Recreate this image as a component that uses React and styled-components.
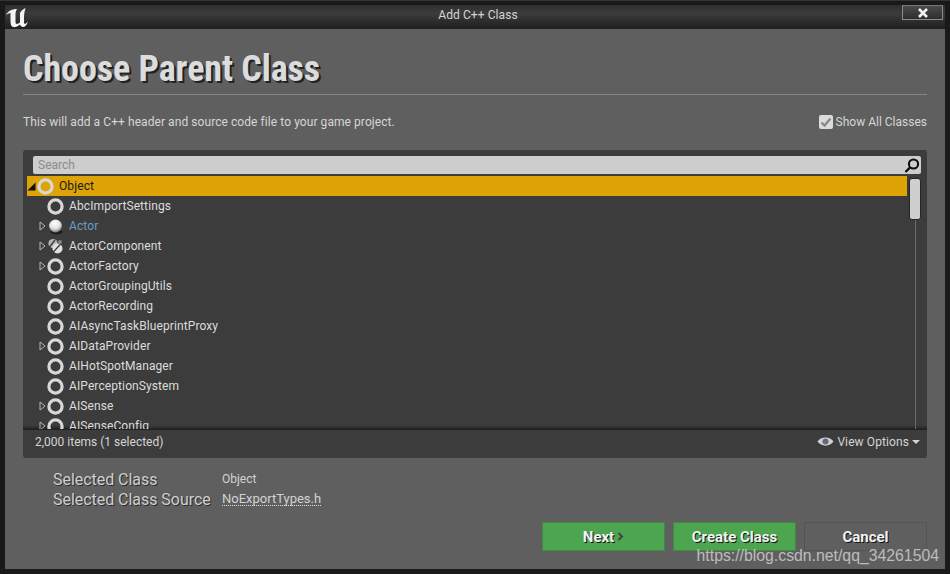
import React from "react";
import styled, { createGlobalStyle } from "styled-components";

const Global = createGlobalStyle`
  html, body { margin: 0; padding: 0; background: #1c1c1c; }
  #root { width: 950px; height: 574px; overflow: hidden; }
  * { box-sizing: border-box; }
`;

const Window = styled.div`
  position: relative;
  width: 950px;
  height: 574px;
  padding: 4px 5px 5px 5px;
  background: #191919;
  border-top: 1px solid #333;
  font-family: Roboto, "Liberation Sans", sans-serif;
  display: flex;
  flex-direction: column;
  overflow: hidden;
`;

const TitleBar = styled.div`
  height: 24px;
  flex: none;
  padding: 0 0 5px 6px;
  background: linear-gradient(#2e2e2e, #3c3c3c 35%, #1e1e1e);
  display: flex;
  align-items: center;
  justify-content: center;
  position: relative;
  color: #d4d4d4;
  font-size: 12px;
  letter-spacing: 0.08px;
`;

const Logo = styled.svg`
  position: absolute;
  left: 1px;
  top: 2px;
`;

const CloseBtn = styled.div`
  position: absolute;
  right: 2px;
  top: 0;
  width: 41px;
  height: 15px;
  border: 1px solid #8c8c8c;
  border-top-color: #777;
  background: linear-gradient(#4b4b4b, #2e2e2e);
  display: flex;
  align-items: center;
  justify-content: center;
`;

const Body = styled.div`
  flex: 1;
  background: #5f5f5f;
  display: flex;
  flex-direction: column;
  padding: 0 18px;
  min-height: 0;
`;

const Heading = styled.h1`
  margin: 22px 0 0;
  height: 36px;
  line-height: 36px;
  font-size: 36px;
  font-weight: 700;
  color: #dcdcdc;
  text-shadow: 2px 2px 0 #222;
  font-family: Roboto, sans-serif;
  font-stretch: condensed;
  letter-spacing: -0.06px;
`;

const Rule = styled.div`
  height: 1px;
  background: #858585;
  margin-top: 7px;
`;

const InfoRow = styled.div`
  display: flex;
  justify-content: space-between;
  align-items: center;
  margin-top: 18px;
  height: 18px;
  color: #d6d6d6;
  font-size: 12px;
`;

const InfoText = styled.span`
  letter-spacing: 0.07px;
`;

const CheckLabel = styled.div`
  display: flex;
  align-items: center;
  gap: 3px;
`;

const CheckBox = styled.div`
  width: 14px;
  height: 14px;
  border-radius: 2px;
  background: #dcdcdc;
  display: flex;
  align-items: center;
  justify-content: center;
`;

const Panel = styled.div`
  margin-top: 19px;
  height: 308px;
  background: #3c3c3c;
  border-radius: 3px;
  display: flex;
  flex-direction: column;
  padding: 6px 6px 0 4px;
  overflow: hidden;
`;

const SearchBar = styled.div`
  flex: none;
  height: 18px;
  margin-left: 6px;
  background: #cdcdcd;
  border-radius: 2px;
  display: flex;
  align-items: center;
  justify-content: space-between;
  padding: 0 0 0 5px;
  color: #8b8b8b;
  font-size: 12px;
`;

const ListArea = styled.div`
  flex: 1;
  min-height: 0;
  margin-top: 2px;
  display: flex;
  overflow: hidden;
  margin-right: -6px;
  margin-left: -4px;
  padding: 0 6px 0 4px;
  border-bottom: 1px solid #222;
  box-shadow: inset 0 -3px 3px -2px #1a1a1a;
`;

const List = styled.div`
  flex: 1;
  min-width: 0;
  overflow: hidden;
`;

const Row = styled.div`
  height: 20px;
  flex: none;
  display: flex;
  align-items: center;
  padding-left: ${p => (p.$root ? 0 : 11)}px;
  background: ${p => (p.$selected ? "#dea306" : "transparent")};
  color: ${p => (p.$selected ? "#1a1a1a" : p.$link ? "#6d9dc0" : "#dcdcdc")};
  font-size: 12px;
  letter-spacing: 0.1px;
`;

const ArrowSlot = styled.div`
  width: ${p => (p.$root ? 9 : 8)}px;
  height: 10px;
  flex: none;
  display: flex;
  align-items: center;
  justify-content: center;
`;

const IconSlot = styled.div`
  width: 17px;
  height: 17px;
  flex: none;
  margin: 0 5px 0 1px;
`;

const Scroll = styled.div`
  width: 12px;
  flex: none;
  margin-left: 2px;
  padding-top: 2px;
  position: relative;
`;

const ScrollTrack = styled.div`
  position: absolute;
  top: 44px;
  bottom: 0;
  left: 6px;
  width: 1px;
  background: #6a6a6a;
`;

const Thumb = styled.div`
  width: 12px;
  height: 42px;
  background: #cfcfcf;
  border: 1px solid #262626;
  border-radius: 3px;
`;

const StatusBar = styled.div`
  flex: none;
  height: 28px;
  display: flex;
  align-items: center;
  justify-content: space-between;
  padding: 0 1px 5px 8px;
  color: #d4d4d4;
  font-size: 12px;
`;

const ViewOptions = styled.div`
  display: flex;
  align-items: center;
  gap: 3px;
  letter-spacing: 0.1px;
`;

const Details = styled.div`
  margin: 11px 0 0 30px;
  display: grid;
  grid-template-columns: 169px auto;
  grid-auto-rows: 20px;
  align-items: center;
`;

const DetailLabel = styled.div`
  font-size: 16px;
  color: #cfcfcf;
  text-shadow: 1px 1px 0 #2c2c2c;
  letter-spacing: -0.04px;
`;

const DetailValue = styled.div`
  font-size: 12px;
  color: #d2d2d2;
`;

const DetailLink = styled.span`
  font-size: 13px;
  border-bottom: 1px dotted #e0e0e0;
  line-height: 13px;
  display: inline-block;
  margin-top: -4px;
`;

const Footer = styled.div`
  display: flex;
  justify-content: flex-end;
  gap: 8px;
  margin-top: 13px;
`;

const Btn = styled.div`
  width: 123px;
  height: 29px;
  display: flex;
  align-items: center;
  justify-content: center;
  gap: 3px;
  font-size: 15px;
  font-weight: 700;
  color: #f2f2f2;
  text-shadow: 1px 1px 0 #111;
  background: ${p => (p.$primary ? "#4da54f" : "#5f5f5f")};
  border: 1px solid ${p => (p.$primary ? "#3d8a40" : "#545454")};
`;

const Watermark = styled.div`
  position: absolute;
  right: 11px;
  bottom: 9px;
  font-family: "Liberation Sans", Arial, sans-serif;
  font-size: 15.8px;
  color: rgba(225, 225, 225, 0.72);
`;

const Ring = () => (
  <svg width="17" height="17" viewBox="0 0 17 17">
    <circle cx="8.5" cy="8.5" r="6.6" fill="none" stroke="#d8d8d8" strokeWidth="3.2" />
  </svg>
);

const Ball = () => (
  <svg width="17" height="17" viewBox="0 0 17 17">
    <defs>
      <radialGradient id="ball" cx="45%" cy="30%" r="70%">
        <stop offset="0" stopColor="#fff" />
        <stop offset="0.6" stopColor="#e0e0e0" />
        <stop offset="1" stopColor="#777" />
      </radialGradient>
    </defs>
    <ellipse cx="9.5" cy="14" rx="6" ry="2.4" fill="#1f1f1f" />
    <circle cx="8.5" cy="8" r="6.4" fill="url(#ball)" />
  </svg>
);

const Comp = () => (
  <svg width="17" height="17" viewBox="0 0 17 17">
    <circle cx="6" cy="5.5" r="4.6" fill="#b8b8b8" />
    <circle cx="10.5" cy="10.5" r="5" fill="#e2e2e2" />
    <path d="M1 11 L8 2 M4.5 16 L15.5 4" stroke="#3c3c3c" strokeWidth="1.3" />
    <circle cx="13" cy="4" r="1.9" fill="#8a8a8a" />
  </svg>
);

const Arrow = ({ open }) =>
  open ? (
    <svg width="9" height="9" viewBox="0 0 9 9"><path d="M0.5 8.5 L8.5 8.5 L8.5 0.5 Z" fill="#111" /></svg>
  ) : (
    <svg width="7" height="10" viewBox="0 0 7 10"><path d="M1 1 L6 5 L1 9 Z" fill="none" stroke="#b5b5b5" strokeWidth="1" /></svg>
  );

const items = [
  { name: "AbcImportSettings" },
  { name: "Actor", arrow: true, icon: "ball", link: true },
  { name: "ActorComponent", arrow: true, icon: "comp" },
  { name: "ActorFactory", arrow: true },
  { name: "ActorGroupingUtils" },
  { name: "ActorRecording" },
  { name: "AIAsyncTaskBlueprintProxy" },
  { name: "AIDataProvider", arrow: true },
  { name: "AIHotSpotManager" },
  { name: "AIPerceptionSystem" },
  { name: "AISense", arrow: true },
  { name: "AISenseConfig", arrow: true },
];

export default function App() {
  return (
    <Window>
      <Global />
      <TitleBar>
        <Logo width="24" height="22" viewBox="0 0 24 22">
          <path
            d="M0 8 C2 4 6 2 11 2 C9 5 9.5 8 9.5 11 L9.5 15 C9.5 17.5 11.5 17.5 14 15.5 L14 6 C15 4 17 2 19.5 1 C18.5 4 18 7 18 10 L18 16 C18.5 17.5 20 17 22 14.5 C21 18 19 20 17 20 C15.5 20 14.5 19 14 17.5 C12 19.5 9 20.5 7 20 C5 19.5 4.5 17 4.5 14 L4.5 6 C3 6 1 7 0 8 Z"
            fill="#f4f4f4"
          />
        </Logo>
        Add C++ Class
        <CloseBtn>
          <svg width="12" height="10" viewBox="0 0 12 10">
            <path d="M2 1 L10 9 M10 1 L2 9" stroke="#f2f2f2" strokeWidth="2.6" />
          </svg>
        </CloseBtn>
      </TitleBar>
      <Body>
        <Heading>Choose Parent Class</Heading>
        <Rule />
        <InfoRow>
          <InfoText>This will add a C++ header and source code file to your game project.</InfoText>
          <CheckLabel>
            <CheckBox>
              <svg width="12" height="10" viewBox="0 0 12 10">
                <path d="M1.5 5.5 L4.5 8.5 L10.5 1.5" fill="none" stroke="#8a8a8a" strokeWidth="2.4" />
              </svg>
            </CheckBox>
            Show All Classes
          </CheckLabel>
        </InfoRow>
        <Panel>
          <SearchBar>
            Search
            <svg width="17" height="17" viewBox="0 0 17 17">
              <circle cx="9.5" cy="7" r="4.6" fill="none" stroke="#0c0c0c" strokeWidth="2" />
              <path d="M6 10.5 L1.5 15" stroke="#0c0c0c" strokeWidth="2.4" />
            </svg>
          </SearchBar>
          <ListArea>
            <List>
              <Row $root $selected>
                <ArrowSlot $root><Arrow open /></ArrowSlot>
                <IconSlot><Ring /></IconSlot>
                Object
              </Row>
              {items.map(it => (
                <Row key={it.name} $link={it.link}>
                  <ArrowSlot>{it.arrow && <Arrow />}</ArrowSlot>
                  <IconSlot>
                    {it.icon === "ball" ? <Ball /> : it.icon === "comp" ? <Comp /> : <Ring />}
                  </IconSlot>
                  {it.name}
                </Row>
              ))}
            </List>
            <Scroll>
              <ScrollTrack />
              <Thumb />
            </Scroll>
          </ListArea>
          <StatusBar>
            <span>2,000 items (1 selected)</span>
            <ViewOptions>
              <svg width="17" height="11" viewBox="0 0 17 11">
                <path d="M0.5 5.5 C4 0 13 0 16.5 5.5 C13 11 4 11 0.5 5.5 Z" fill="#cfcfcf" />
                <circle cx="8.5" cy="5.5" r="3" fill="#5f6c80" />
              </svg>
              View Options
              <svg width="8" height="4" viewBox="0 0 8 4"><path d="M0 0 L8 0 L4 4 Z" fill="#d4d4d4" /></svg>
            </ViewOptions>
          </StatusBar>
        </Panel>
        <Details>
          <DetailLabel>Selected Class</DetailLabel>
          <DetailValue>Object</DetailValue>
          <DetailLabel>Selected Class Source</DetailLabel>
          <DetailValue><DetailLink>NoExportTypes.h</DetailLink></DetailValue>
        </Details>
        <Footer>
          <Btn $primary>
            Next
            <svg width="7" height="9" viewBox="0 0 7 9"><path d="M1.5 1 L5 4.5 L1.5 8" fill="none" stroke="#444" strokeWidth="2" /></svg>
          </Btn>
          <Btn $primary>Create Class</Btn>
          <Btn>Cancel</Btn>
        </Footer>
      </Body>
      <Watermark>https://blog.csdn.net/qq_34261504</Watermark>
    </Window>
  );
}
